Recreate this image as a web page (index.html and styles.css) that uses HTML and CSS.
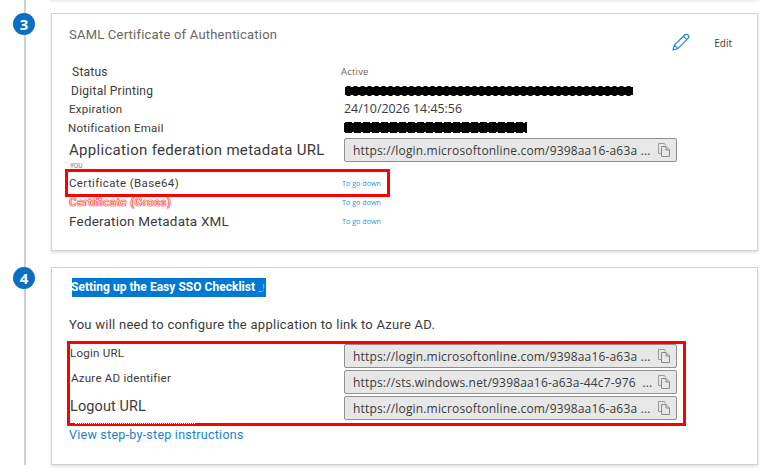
FILE: index.html
```html
<!DOCTYPE html>
<html lang="en">
<head>
<meta charset="utf-8">
<title>SAML single sign-on</title>
<link rel="stylesheet" href="styles.css">
</head>
<body>
<svg class="sprite" width="0" height="0" aria-hidden="true">
  <symbol id="copy" viewBox="0 0 12 14">
    <path d="M.5 .5h6l.5 .5v1.5M.5 .5v10h3" fill="none" stroke="#9a9a9a"/>
    <path d="M3.5 3.5h4.5l3.5 3.5v6.5h-8zM8 3.5v3.5h3.5" fill="none" stroke="#8a8a8a"/>
  </symbol>
</svg>
<div class="prev-card"></div>
<main class="timeline">
  <section class="step step-cert">
    <div class="rail"><span class="badge">3</span></div>
    <div class="card card-cert">
      <header class="card-head">
        <h2 class="title">SAML Certificate of Authentication</h2>
        <div class="edit">
          <svg class="pencil" width="18" height="18" viewBox="0 0 18 18" aria-hidden="true">
            <path d="M1 17l1.4-4.8L12.6 2a2 2 0 0 1 3.4 3.4L5.8 15.6zM2.4 12.2l3.4 3.4M11.4 3.2l3.4 3.4" fill="none" stroke="#1e88e0" stroke-width="1.2" stroke-linejoin="round"/>
          </svg>
          <span class="edit-label">Edit</span>
        </div>
      </header>
      <div class="row"><span class="label label-status">Status</span><span class="active">Active</span></div>
      <div class="row"><span class="label label-print">Digital Printing</span><span class="redact redact-long"></span></div>
      <div class="row row-up"><span class="label label-small">Expiration</span><span class="date">24/10/2026 14:45:56</span></div>
      <div class="row row-up"><span class="label label-notify">Notification Email</span><span class="redact redact-short"></span></div>
      <div class="row row-field"><span class="label label-big">Application federation metadata URL</span>
        <div class="field"><span class="field-text">https://login.microsoftonline.com/9398aa16-a63a ...</span><svg class="copy" width="12" height="14"><use href="#copy"/></svg></div>
      </div>
      <div class="you">YOU</div>
      <div class="row row-outlined"><span class="label label-cert">Certificate (Base64)</span><a class="down" href="#">To go down</a><span class="outline outline-cert"></span></div>
      <div class="row"><span class="label label-gross">Certificate (Gross)</span><a class="down" href="#">To go down</a></div>
      <div class="row"><span class="label label-fed">Federation Metadata XML</span><a class="down" href="#">To go down</a></div>
    </div>
  </section>
  <section class="step">
    <div class="rail"><span class="badge">4</span></div>
    <div class="card card-setup">
      <h2 class="selected">Setting up the Easy SSO Checklist <span class="selected-tail">_!</span></h2>
      <p class="intro">You will need to configure the application to link to Azure AD.</p>
      <div class="urls">
        <div class="row row-url"><span class="label label-login">Login URL</span>
          <div class="field"><span class="field-text">https://login.microsoftonline.com/9398aa16-a63a ...</span><svg class="copy" width="12" height="14"><use href="#copy"/></svg></div>
        </div>
        <div class="row row-url"><span class="label label-azure">Azure AD identifier</span>
          <div class="field"><span class="field-text">https://sts.windows.net/9398aa16-a63a-44c7-976&nbsp; ...</span><svg class="copy" width="12" height="14"><use href="#copy"/></svg></div>
        </div>
        <div class="row row-url"><span class="label label-logout">Logout URL</span>
          <div class="field"><span class="field-text">https://login.microsoftonline.com/9398aa16-a63a ...</span><svg class="copy" width="12" height="14"><use href="#copy"/></svg></div>
        </div>
        <span class="outline outline-urls"></span>
        <span class="specks"></span>
      </div>
      <a class="steps-link" href="#">View step-by-step instructions</a>
    </div>
  </section>
</main>
</body>
</html>
```

FILE: styles.css
```css
* { box-sizing: border-box; }

html, body {
  margin: 0;
  height: 472px;
  overflow: hidden;
  background: #fff;
  color: #3b3a39;
  font-family: Roboto, "Liberation Sans", sans-serif;
}

.sprite { position: absolute; }

.prev-card {
  height: 0;
  margin: 0 9px 0 51px;
  box-shadow: 0 0 3px 1px rgba(0, 0, 0, .12);
}

.timeline {
  position: relative;
  padding-top: 13px;
}

.timeline::before {
  content: "";
  position: absolute;
  top: 0;
  bottom: 0;
  left: 24px;
  width: 1.5px;
  background: #d0d0d0;
}

.step { display: flex; }
.step-cert { margin-bottom: 16px; }

.rail {
  position: relative;
  width: 51px;
  flex: none;
  padding-left: 13px;
}

.badge {
  display: flex;
  align-items: center;
  justify-content: center;
  width: 22px;
  height: 22px;
  border-radius: 50%;
  background: #0a6fc2;
  color: #fff;
  font: 700 15px "Open Sans", sans-serif;
}

.card {
  width: 707px;
  padding-left: 17px;
  border: 1px solid #d2d2d2;
  background: #fff;
  box-shadow: 0 1.5px 3px rgba(0, 0, 0, .14);
}

.card-cert { height: 238px; }
.card-setup { height: 198px; }

.card-head {
  display: flex;
  height: 48px;
  padding-top: 13px;
  padding-right: 25px;
}

.title {
  margin: 0;
  font-size: 13px;
  font-weight: 400;
  line-height: 16px;
  letter-spacing: .22px;
  color: #68665f;
}

.edit {
  display: flex;
  align-items: center;
  height: 18px;
  margin: 6px 0 0 auto;
}

.pencil { margin-right: 24px; }

.edit-label {
  margin-top: 1px;
  font: 10px "Open Sans", sans-serif;
}

.row {
  position: relative;
  display: flex;
  align-items: center;
  height: 19px;
}

.row-up { padding-bottom: 2px; }

.label {
  flex: none;
  width: 275px;
  font-size: 12px;
  letter-spacing: .25px;
}

.label-status { padding-left: 3px; }
.label-print { padding-left: 2px; }
.label-small { font-size: 11.5px; }
.label-notify { margin-left: -1px; margin-right: 1px; font-size: 11.5px; }
.label-big { font-size: 15px; letter-spacing: .3px; }
.label-cert { font-size: 11.5px; padding-left: 0; letter-spacing: .38px; }
.label-fed { font-size: 13.5px; letter-spacing: .2px; }
.label-gross {
  font-size: 11.5px;
  letter-spacing: .42px;
  color: #ffdcdc;
  text-shadow: 0 0 1px #f00, 0 0 1px #f00, 0 0 1px #f00;
}

.active {
  margin-left: -3px;
  font: 9.5px "Open Sans", sans-serif;
  color: #666;
  letter-spacing: .2px;
}

.date {
  font: 12.4px "Open Sans", sans-serif;
}

.redact {
  display: block;
}

.redact-long {
  width: 288px;
  height: 10px;
  margin-left: 1px;
  background: radial-gradient(circle, #000 4.6px, transparent 5.2px) 0 0 / 7px 10px repeat-x;
}

.redact-short {
  width: 183px;
  height: 11px;
  background: radial-gradient(circle, #000 6px, transparent 6.4px) 0 0 / 9px 11px repeat-x;
}

.row-field { height: 24px; }

.field {
  display: flex;
  align-items: center;
  justify-content: space-between;
  width: 333px;
  height: 24px;
  padding: 0 6px 0 8px;
  border: 1px solid #8f8f8f;
  border-radius: 2px;
  background: #e7e7e7;
}

.field-text {
  font: 12px "Open Sans", sans-serif;
  letter-spacing: .17px;
  white-space: nowrap;
  color: #3a3a3a;
}

.copy { flex: none; }

.you {
  height: 11px;
  padding-left: 1px;
  font-size: 6.5px;
  line-height: 8px;
  color: #777;
}

.down {
  margin-left: -2px;
  font: 7.2px "Open Sans", sans-serif;
  color: #2b90e0;
  text-decoration: none;
}

.outline {
  position: absolute;
  border: 3px solid #f00;
  pointer-events: none;
}

.outline-cert {
  top: -4px;
  left: -4px;
  width: 325px;
  height: 28px;
}

.selected {
  width: 194px;
  height: 19px;
  margin: 10px 0 0 3px;
  overflow: hidden;
  background: #0078d4;
  color: #fff;
  font-size: 12px;
  font-weight: 700;
  line-height: 19px;
  letter-spacing: .03px;
  text-indent: -1px;
  white-space: nowrap;
}

.selected-tail {
  font-size: 9px;
  font-weight: 400;
  color: #a9d2f2;
}

.intro {
  margin: 18px 0 0;
  font-size: 13px;
  line-height: 20px;
  letter-spacing: .26px;
}

.urls {
  position: relative;
  display: flex;
  flex-direction: column;
  gap: 2px;
  margin-top: 9px;
}

.row-url { height: 24px; }

.label-login { padding-left: 1px; font-size: 11.5px; margin-top: -7px; }
.label-azure { padding-left: 2px; font-size: 11.5px; margin-top: -9px; }
.label-logout { padding-left: 1px; font-size: 14.5px; margin-top: -4px; letter-spacing: .1px; }

.outline-urls {
  top: -3px;
  left: -2px;
  width: 619px;
  height: 85px;
}

.specks {
  position: absolute;
  top: 79px;
  left: 6px;
  width: 120px;
  border-top: 1px dotted #fff;
}

.steps-link {
  display: block;
  margin-top: 7px;
  font-size: 12.5px;
  letter-spacing: .25px;
  line-height: 16px;
  color: #1a7fd0;
  text-decoration: none;
}
```
